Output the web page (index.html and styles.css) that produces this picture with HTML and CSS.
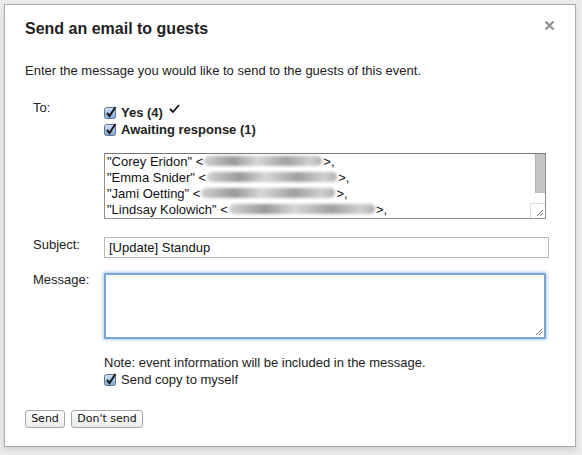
FILE: index.html
```html
<!DOCTYPE html>
<html>
<head>
<meta charset="utf-8">
<link rel="stylesheet" href="styles.css">
</head>
<body>
<div class="dialog">
  <div class="title-row">
    <div class="title">Send an email to guests</div>
    <svg class="close" width="11" height="11" viewBox="0 0 11 11"><path d="M1.5 1.5 L9.5 9.5 M9.5 1.5 L1.5 9.5" stroke="#8e8e8e" stroke-width="2.2"/></svg>
  </div>
  <div class="intro">Enter the message you would like to send to the guests of this event.</div>
  <div class="form">
    <div class="label">To:</div>
    <div class="field">
      <div class="checks">
        <div class="check-row bold">
          <svg class="cb" width="13" height="13" viewBox="0 0 13 13"><defs><linearGradient id="g1" x1="0" y1="0" x2="0" y2="1"><stop offset="0" stop-color="#d3e3f5"/><stop offset="1" stop-color="#7ea9db"/></linearGradient></defs><rect x="0.5" y="1.5" width="11" height="11" rx="2" fill="url(#g1)" stroke="#5f7391"/><path d="M3 7 L5.5 10 L11.5 1" fill="none" stroke="#1a1a1a" stroke-width="2"/></svg>
          <span>Yes (4)</span>
          <svg class="tick" width="11" height="10" viewBox="0 0 11 10"><path d="M1 5 L4 8 L10 1" fill="none" stroke="#111" stroke-width="1.8"/></svg>
        </div>
        <div class="check-row bold">
          <svg class="cb" width="13" height="13" viewBox="0 0 13 13"><rect x="0.5" y="1.5" width="11" height="11" rx="2" fill="url(#g1)" stroke="#5f7391"/><path d="M3 7 L5.5 10 L11.5 1" fill="none" stroke="#1a1a1a" stroke-width="2"/></svg>
          <span>Awaiting response (1)</span>
        </div>
      </div>
      <div class="recipients">
        <div class="lines">
          <div>"Corey Eridon" &lt;<span class="blur" style="width:118px"></span>&gt;,</div>
          <div>"Emma Snider" &lt;<span class="blur" style="width:130px"></span>&gt;,</div>
          <div>"Jami Oetting" &lt;<span class="blur" style="width:134px"></span>&gt;,</div>
          <div>"Lindsay Kolowich" &lt;<span class="blur" style="width:146px"></span>&gt;,</div>
        </div>
        <div class="scrollbar">
          <div class="thumb"></div>
          <div class="grip"><svg width="9" height="9" viewBox="0 0 9 9"><path d="M8 2 L2 8 M8 5 L5 8" stroke="#777" stroke-width="1"/></svg></div>
        </div>
      </div>
    </div>
    <div class="label subj-label">Subject:</div>
    <div class="field subj-field">
      <div class="input">[Update] Standup</div>
    </div>
    <div class="label msg-label">Message:</div>
    <div class="field msg-field">
      <div class="message"><svg class="mgrip" width="9" height="9" viewBox="0 0 9 9"><path d="M8 2 L2 8 M8 5 L5 8" stroke="#777" stroke-width="1"/></svg></div>
    </div>
    <div></div>
    <div class="field notes">
      <div class="note">Note: event information will be included in the message.</div>
      <div class="check-row">
        <svg class="cb" width="13" height="13" viewBox="0 0 13 13"><rect x="0.5" y="1.5" width="11" height="11" rx="2" fill="url(#g1)" stroke="#5f7391"/><path d="M3 7 L5.5 10 L11.5 1" fill="none" stroke="#1a1a1a" stroke-width="2"/></svg>
        <span>Send copy to myself</span>
      </div>
    </div>
  </div>
  <div class="buttons">
    <button class="btn send">Send</button>
    <button class="btn dont">Don't send</button>
  </div>
</div>
</body>
</html>
```
FILE: styles.css
```css
html, body {
  margin: 0;
  padding: 0;
  background: #ececec;
  font-family: "Liberation Sans", Arial, sans-serif;
  color: #222;
}
body {
  padding: 4px 0 0 4px;
  height: 455px;
  box-sizing: border-box;
  overflow: hidden;
}
.dialog {
  width: 572px;
  height: 443px;
  background: #fff;
  border: 1px solid #aaa;
  box-shadow: 0 3px 6px rgba(0,0,0,0.12);
  padding: 0 20px 0 20px;
  box-sizing: border-box;
}
.title-row {
  display: flex;
  justify-content: space-between;
  align-items: flex-start;
  padding-top: 14px;
}
.title {
  font-size: 16px;
  font-weight: bold;
  line-height: 20px;
  color: #222;
}
.close {
  margin-top: 1px;
  margin-right: 0;
}
.intro {
  font-size: 13px;
  line-height: 16px;
  margin-top: 24px;
}
.form {
  display: grid;
  grid-template-columns: 79px 445px;
  margin-top: 21px;
  font-size: 13px;
}
.label {
  padding-left: 8px;
  line-height: 16px;
}
.checks {
  margin-top: 4px;
}
.check-row {
  display: flex;
  align-items: center;
  height: 17px;
  line-height: 17px;
}
.bold {
  font-weight: bold;
}
.cb {
  margin-right: 4px;
  margin-top: -1px;
  flex: none;
}
.tick {
  margin-left: 6px;
  margin-top: -8px;
}
.recipients {
  margin-top: 15px;
  width: 442px;
  height: 66px;
  box-sizing: border-box;
  border: 1px solid #8f8f8f;
  border-top-color: #777;
  display: flex;
  justify-content: space-between;
}
.lines {
  padding: 0 0 0 2px;
  font-size: 13px;
  line-height: 16px;
  color: #111;
  overflow: hidden;
  white-space: nowrap;
}
.blur {
  display: inline-block;
  height: 10px;
  margin: 0 1px;
  vertical-align: 0;
  border-radius: 5px;
  background: linear-gradient(90deg, #d0d0d0, #999 25%, #d6d6d6 45%, #a0a0a0 70%, #cfcfcf 90%, #b0b0b0);
  filter: blur(1.8px);
}
.scrollbar {
  width: 10px;
  display: flex;
  flex-direction: column;
  justify-content: space-between;
}
.thumb {
  height: 39px;
  background: #c4c4c4;
  border-left: 1px solid #b5b5b5;
}
.grip {
  width: 15px;
  height: 15px;
  margin-left: -5px;
  box-sizing: border-box;
  border-left: 1px solid #ddd;
  border-top: 1px solid #ddd;
  display: flex;
  align-items: flex-end;
  justify-content: flex-end;
  padding: 0 1px 1px 0;
}
.subj-label, .subj-field {
  margin-top: 18px;
}
.input {
  height: 21px;
  box-sizing: border-box;
  border: 1px solid #b9b9b9;
  padding: 0 4px;
  font-size: 13px;
  line-height: 19px;
  color: #111;
}
.msg-label, .msg-field {
  margin-top: 15px;
}
.msg-label {
  margin-top: 14px;
}
.message {
  width: 442px;
  height: 66px;
  box-sizing: border-box;
  border: 2px solid #7aa6d6;
  border-radius: 1px;
  box-shadow: 0 0 3px 1px rgba(120,170,225,0.6);
  display: flex;
  align-items: flex-end;
  justify-content: flex-end;
  padding: 0 1px 1px 0;
}
.notes {
  margin-top: 16px;
}
.note {
  line-height: 16px;
}
.notes .check-row {
  margin-top: 0;
}
.buttons {
  display: flex;
  gap: 6px;
  margin-top: 22px;
}
.btn {
  height: 18px;
  padding: 0;
  font-family: "DejaVu Sans", sans-serif;
  font-size: 11px;
  color: #111;
  background: linear-gradient(#ffffff, #ececec);
  border: 1px solid #a8a8a8;
  border-radius: 3px;
  line-height: 16px;
}
.send { width: 40px; }
.dont { width: 72px; }
```
